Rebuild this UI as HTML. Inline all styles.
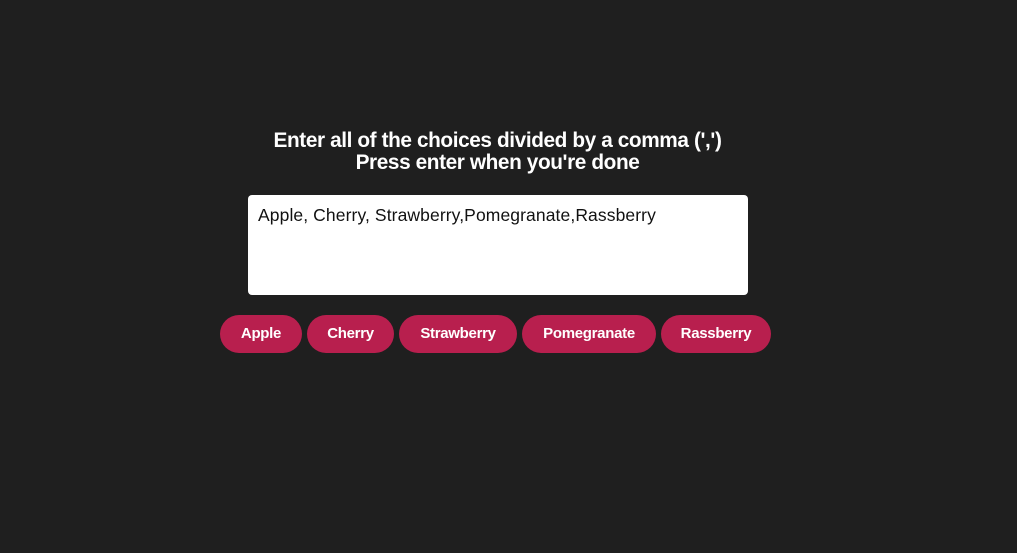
<!DOCTYPE html>
<html><head><style>
body{margin:0;width:1017px;height:553px;background:#1f1f1f;overflow:hidden;font-family:"Liberation Sans",sans-serif;position:relative}
.t{position:absolute;left:-11px;width:1017px;text-align:center;color:#fff;font-weight:bold;font-size:20.8px;letter-spacing:-0.4px;line-height:22px;top:130px}
.ta{position:absolute;left:248px;top:195px;width:500px;height:100px;background:#fff;border-radius:4px}
.ta span{position:absolute;left:10px;top:10px;font-size:17.5px;color:#111;letter-spacing:0.1px;white-space:nowrap}
.p{position:absolute;top:315px;height:38px;line-height:38px;border-radius:19px;background:#b81f4e;color:#fff;font-weight:bold;font-size:15px;text-align:center;letter-spacing:-0.3px}
</style></head><body>
<div class="t">Enter all of the choices divided by a comma (',')<br>Press enter when you're done</div>
<div class="ta"><span>Apple, Cherry, Strawberry,Pomegranate,Rassberry</span></div>
<div class="p" style="left:220px;width:82px">Apple</div>
<div class="p" style="left:307px;width:87px">Cherry</div>
<div class="p" style="left:399px;width:118px">Strawberry</div>
<div class="p" style="left:522px;width:134px">Pomegranate</div>
<div class="p" style="left:661px;width:110px">Rassberry</div>
</body></html>
